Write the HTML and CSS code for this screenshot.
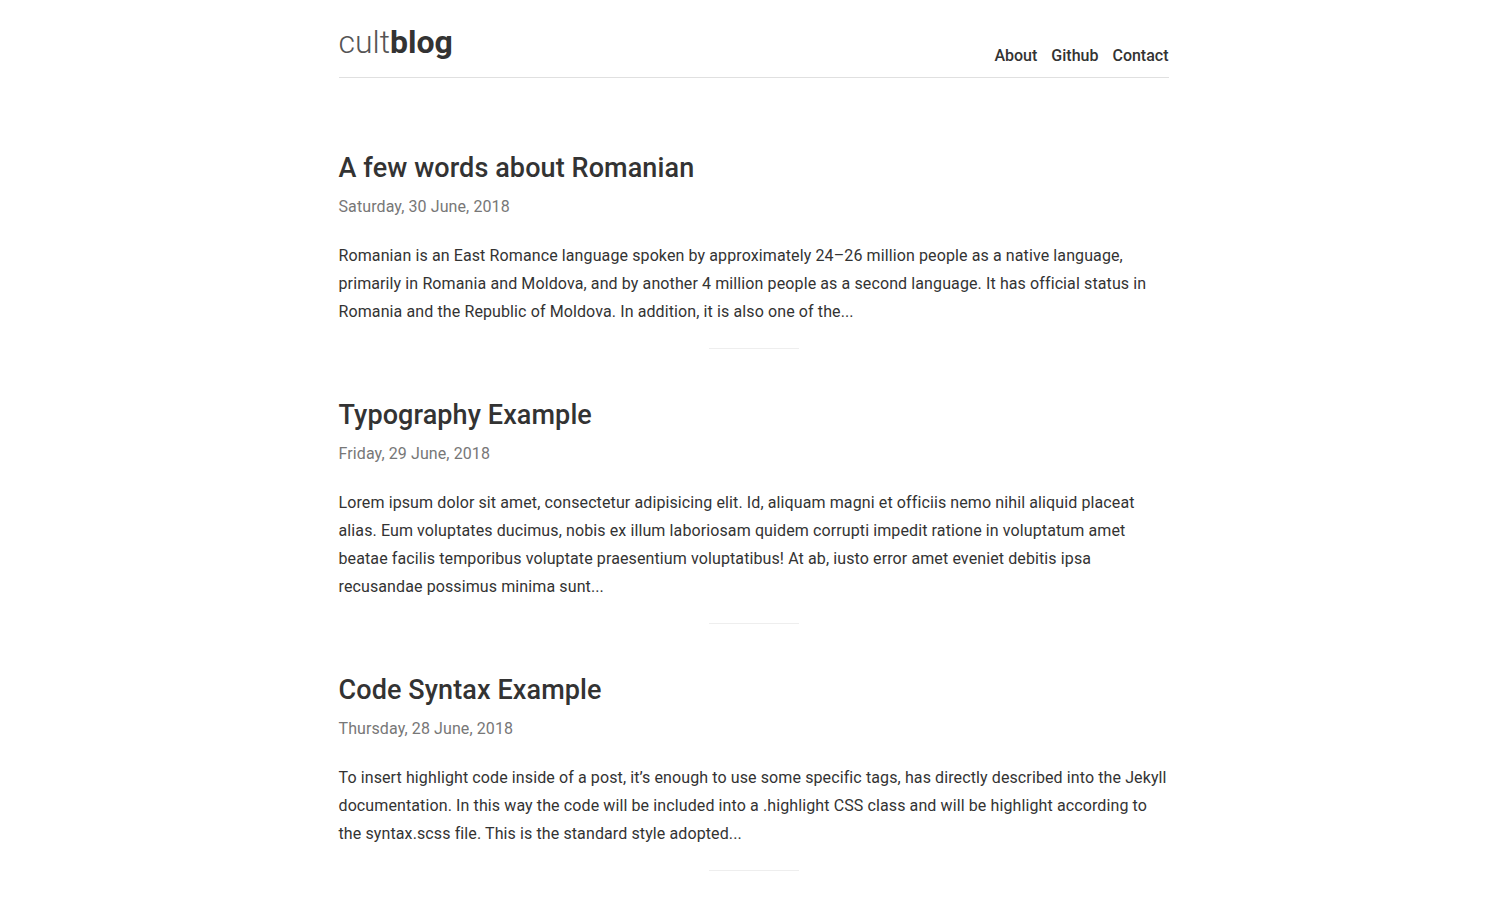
FILE: index.html
```html
<!DOCTYPE html>
<html lang="en">
<head>
<meta charset="utf-8">
<title>cultblog</title>
<link rel="stylesheet" href="styles.css">
</head>
<body>
<div class="wrap">
  <header class="site-header">
    <a class="logo" href="#"><span class="logo-light">cult</span><span class="logo-bold">blog</span></a>
    <nav class="nav">
      <a href="#">About</a>
      <a href="#">Github</a>
      <a href="#">Contact</a>
    </nav>
  </header>
  <main class="posts">
    <article class="post">
      <h2 class="post-title">A few words about Romanian</h2>
      <div class="post-date">Saturday, 30 June, 2018</div>
      <p class="post-excerpt">Romanian is an East Romance language spoken by approximately 24–26 million people as a native language, primarily in Romania and Moldova, and by another 4 million people as a second language. It has official status in Romania and the Republic of Moldova. In addition, it is also one of the...</p>
      <hr class="post-sep">
    </article>
    <article class="post">
      <h2 class="post-title">Typography Example</h2>
      <div class="post-date">Friday, 29 June, 2018</div>
      <p class="post-excerpt">Lorem ipsum dolor sit amet, consectetur adipisicing elit. Id, aliquam magni et officiis nemo nihil aliquid placeat alias. Eum voluptates ducimus, nobis ex illum laboriosam quidem corrupti impedit ratione in voluptatum amet beatae facilis temporibus voluptate praesentium voluptatibus! At ab, iusto error amet eveniet debitis ipsa recusandae possimus minima sunt...</p>
      <hr class="post-sep">
    </article>
    <article class="post">
      <h2 class="post-title">Code Syntax Example</h2>
      <div class="post-date">Thursday, 28 June, 2018</div>
      <p class="post-excerpt">To insert highlight code inside of a post, it’s enough to use some specific tags, has directly described into the Jekyll documentation. In this way the code will be included into a .highlight CSS class and will be highlight according to the syntax.scss file. This is the standard style adopted...</p>
      <hr class="post-sep">
    </article>
  </main>
</div>
</body>
</html>
```

FILE: styles.css
```css
html, body {
  margin: 0;
  padding: 0;
  background: #fff;
}
body {
  font-family: Roboto, "Liberation Sans", sans-serif;
  color: #333;
}
a {
  text-decoration: none;
  color: inherit;
}
.wrap {
  width: 830px;
  margin: 0 auto;
  padding-left: 1px;
}
.site-header {
  display: flex;
  justify-content: space-between;
  align-items: flex-end;
  height: 78px;
  border-bottom: 1px solid #e0e0e0;
  box-sizing: border-box;
}
.logo {
  font-size: 32px;
  line-height: 1;
  padding-bottom: 19px;
}
.logo-light {
  font-weight: 300;
  color: #555;
}
.logo-bold {
  font-weight: 700;
  color: #333;
}
.nav {
  display: flex;
  gap: 14px;
  padding-bottom: 11px;
}
.nav a {
  font-size: 16px;
  font-weight: 500;
  color: #333;
  line-height: 20px;
}
.posts {
  padding-top: 70px;
}
.post-title {
  font-size: 27px;
  font-weight: 500;
  line-height: 40px;
  margin: 0;
  color: #333;
  letter-spacing: 0.1px;
}
.post-date {
  font-size: 16px;
  color: #777;
  line-height: 20px;
  margin-top: 9px;
  letter-spacing: 0.1px;
}
.post-excerpt {
  font-size: 16px;
  line-height: 28px;
  margin: 25px 0 0;
  color: #333;
  letter-spacing: 0.11px;
}
.post-sep {
  width: 90px;
  margin: 22px auto 46px;
  border: 0;
  border-top: 1px solid #eee;
  height: 0;
}
```
